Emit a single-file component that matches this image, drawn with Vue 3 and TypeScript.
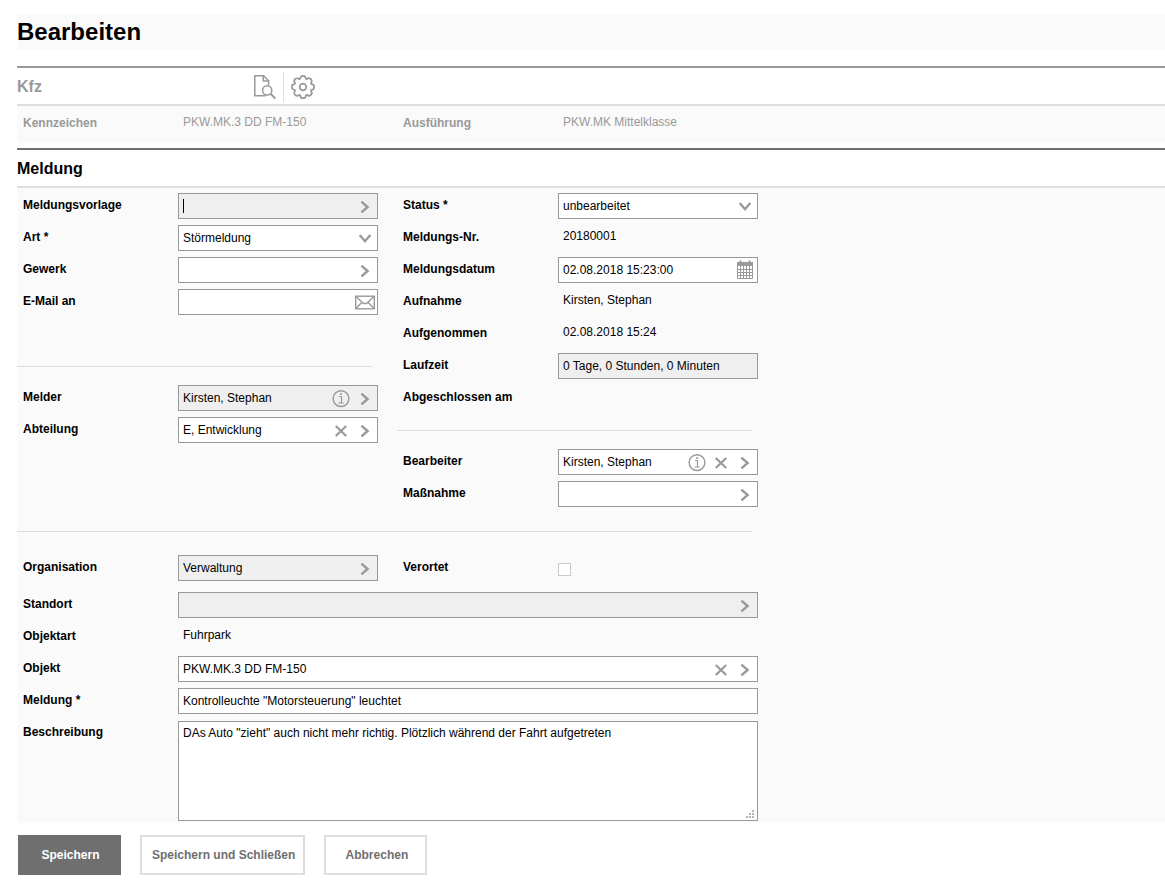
<script setup lang="ts">
import { ref } from 'vue'

type Action = 'info' | 'clear' | 'open' | 'mail' | 'date'
type Kind = 'input' | 'select' | 'text' | 'check' | 'area' | 'gap' | 'rule'

interface Field {
  id: string
  kind: Kind
  label?: string
  value?: string
  locked?: boolean
  caret?: boolean
  options?: string[]
  actions?: Action[]
}

const actionLabels: Record<Action, string> = {
  info: 'Information',
  clear: 'Leeren',
  open: 'Auswählen',
  mail: 'E-Mail',
  date: 'Kalender',
}

const vehicle: Field[] = [
  { id: 'kennzeichen', kind: 'text', label: 'Kennzeichen', value: 'PKW.MK.3 DD FM-150' },
  { id: 'ausfuehrung', kind: 'text', label: 'Ausführung', value: 'PKW.MK Mittelklasse' },
]

const groups = ref<{ name: string; fields: Field[] }[]>([
  {
    name: 'left',
    fields: [
      { id: 'vorlage', kind: 'input', label: 'Meldungsvorlage', value: '', locked: true, caret: true, actions: ['open'] },
      { id: 'art', kind: 'select', label: 'Art *', value: 'Störmeldung', options: ['Störmeldung'] },
      { id: 'gewerk', kind: 'input', label: 'Gewerk', value: '', actions: ['open'] },
      { id: 'email', kind: 'input', label: 'E-Mail an', value: '', actions: ['mail'] },
      { id: 'gap', kind: 'gap' },
      { id: 'rule-left', kind: 'rule' },
      { id: 'melder', kind: 'input', label: 'Melder', value: 'Kirsten, Stephan', locked: true, actions: ['info', 'open'] },
      { id: 'abteilung', kind: 'input', label: 'Abteilung', value: 'E, Entwicklung', actions: ['clear', 'open'] },
    ],
  },
  {
    name: 'right',
    fields: [
      { id: 'status', kind: 'select', label: 'Status *', value: 'unbearbeitet', options: ['unbearbeitet'] },
      { id: 'nummer', kind: 'text', label: 'Meldungs-Nr.', value: '20180001' },
      { id: 'datum', kind: 'input', label: 'Meldungsdatum', value: '02.08.2018 15:23:00', actions: ['date'] },
      { id: 'aufnahme', kind: 'text', label: 'Aufnahme', value: 'Kirsten, Stephan' },
      { id: 'aufgenommen', kind: 'text', label: 'Aufgenommen', value: '02.08.2018 15:24' },
      { id: 'laufzeit', kind: 'input', label: 'Laufzeit', value: '0 Tage, 0 Stunden, 0 Minuten', locked: true },
      { id: 'abgeschlossen', kind: 'text', label: 'Abgeschlossen am', value: '' },
      { id: 'rule-right', kind: 'rule' },
      { id: 'bearbeiter', kind: 'input', label: 'Bearbeiter', value: 'Kirsten, Stephan', actions: ['info', 'clear', 'open'] },
      { id: 'massnahme', kind: 'input', label: 'Maßnahme', value: '', actions: ['open'] },
    ],
  },
  {
    name: 'org',
    fields: [{ id: 'organisation', kind: 'input', label: 'Organisation', value: 'Verwaltung', locked: true, actions: ['open'] }],
  },
  {
    name: 'located',
    fields: [{ id: 'verortet', kind: 'check', label: 'Verortet' }],
  },
  {
    name: 'wide',
    fields: [
      { id: 'standort', kind: 'input', label: 'Standort', value: '', locked: true, actions: ['open'] },
      { id: 'objektart', kind: 'text', label: 'Objektart', value: 'Fuhrpark' },
      { id: 'objekt', kind: 'input', label: 'Objekt', value: 'PKW.MK.3 DD FM-150', actions: ['clear', 'open'] },
      { id: 'meldung', kind: 'input', label: 'Meldung *', value: 'Kontrolleuchte "Motorsteuerung" leuchtet' },
      {
        id: 'beschreibung',
        kind: 'area',
        label: 'Beschreibung',
        value: 'DAs Auto "zieht" auch nicht mehr richtig. Plötzlich während der Fahrt aufgetreten',
      },
    ],
  },
])
</script>

<template>
  <main class="page">
    <h1 class="title">Bearbeiten</h1>

    <section class="vehicle">
      <header class="head">
        <h2>Kfz</h2>
        <div class="tools">
          <button type="button" class="tool" aria-label="Vorschau">
            <svg width="24" height="26" viewBox="0 0 24 26" fill="none" stroke="#999" stroke-width="1.5">
              <path d="M12.6 21.8H1.8V1.8H10.6L15.6 6.8V11.4" />
              <path d="M10.3 2V7.1H15.4" />
              <circle cx="14.2" cy="16.4" r="4.6" />
              <path d="M17.6 19.8L22.4 24.6" stroke-width="2" />
            </svg>
          </button>
          <button type="button" class="tool" aria-label="Einstellungen">
            <svg width="26" height="26" viewBox="0 0 26 26" fill="none" stroke="#999" stroke-width="1.7" stroke-linejoin="round">
              <path d="M10.2 4.6C10.2 0.9 15.8 0.9 15.8 4.6Q16 5 17 5.1C19.6 2.5 23.5 6.4 20.9 9Q21 10 21.4 10.2C25.1 10.2 25.1 15.8 21.4 15.8Q21 16 20.9 17C23.5 19.6 19.6 23.5 17 20.9Q16 21 15.8 21.4C15.8 25.1 10.2 25.1 10.2 21.4Q10 21 9 20.9C6.4 23.5 2.5 19.6 5.1 17Q5 16 4.6 15.8C0.9 15.8 0.9 10.2 4.6 10.2Q5 10 5.1 9C2.5 6.4 6.4 2.5 9 5.1Q10 5 10.2 4.6Z" />
              <circle cx="13" cy="13" r="3.3" />
            </svg>
          </button>
        </div>
      </header>
      <dl class="facts grid">
        <div v-for="f in vehicle" :key="f.id" class="row">
          <dt class="label">{{ f.label }}</dt>
          <dd class="plain">{{ f.value }}</dd>
        </div>
      </dl>
    </section>

    <form class="report" @submit.prevent>
      <header class="head">
        <h2>Meldung</h2>
      </header>
      <div class="panel">
        <div class="grid">
          <div v-for="g in groups" :key="g.name" class="group" :class="g.name">
            <template v-for="f in g.fields" :key="f.id">
              <hr v-if="f.kind === 'rule'" class="rule" />
              <div v-else-if="f.kind === 'gap'" class="row"></div>
              <div v-else-if="f.kind === 'text'" class="row">
                <span class="label">{{ f.label }}</span>
                <output class="plain">{{ f.value }}</output>
              </div>
              <div v-else class="row">
                <label class="label" :for="f.id">{{ f.label }}</label>
                <input v-if="f.kind === 'check'" :id="f.id" class="check" type="checkbox" />
                <div v-else class="field" :class="{ locked: f.locked, caret: f.caret, area: f.kind === 'area' }">
                  <template v-if="f.kind === 'select'">
                    <select :id="f.id" v-model="f.value">
                      <option v-for="o in f.options" :key="o">{{ o }}</option>
                    </select>
                    <svg class="arrow" width="24" height="24" viewBox="0 0 24 24" fill="none" stroke="#999" stroke-width="2.4">
                      <path d="M6.7 8L12 14.2L17.3 8" />
                    </svg>
                  </template>
                  <template v-else-if="f.kind === 'area'">
                    <textarea :id="f.id" v-model="f.value"></textarea>
                    <svg class="grip" width="8" height="8" viewBox="0 0 8 8" fill="#b5b5b5">
                      <path d="M6 0h2v2h-2zM3 3h2v2h-2zM6 3h2v2h-2zM0 6h2v2h-2zM3 6h2v2h-2zM6 6h2v2h-2z" />
                    </svg>
                  </template>
                  <input v-else :id="f.id" v-model="f.value" type="text" :readonly="f.locked" />
                  <button v-for="a in f.actions" :key="a" type="button" class="action" :aria-label="actionLabels[a]">
                    <svg width="24" height="24" viewBox="0 0 24 24" fill="none" stroke="#999">
                      <path v-if="a === 'open'" d="M8.4 7.6L14.6 13L8.4 18.4" stroke-width="2.4" />
                      <path v-else-if="a === 'clear'" d="M6.8 8L17.2 18M17.2 8L6.8 18" stroke-width="2.2" />
                      <g v-else-if="a === 'info'">
                        <circle cx="12" cy="12.6" r="7.9" stroke-width="1.4" />
                        <path d="M10 10.5h2.5v6.3M9.6 17h5" stroke-width="1.2" />
                        <circle cx="12" cy="8" r="1" fill="#999" stroke="none" />
                      </g>
                      <g v-else-if="a === 'mail'" stroke-width="1.4">
                        <rect x="2.7" y="6.2" width="18.6" height="12.6" />
                        <path d="M3 6.5L10.5 13.5H13.5L21 6.5M3 18.5L9 12.3M21 18.5L15 12.3" />
                      </g>
                      <g v-else>
                        <path d="M4 4h16v4H4z" fill="#999" stroke="none" />
                        <path d="M7.5 2.5v3M16.5 2.5v3" stroke-width="2" />
                        <path d="M4.5 8v12.5h15V8M4.5 11.5h15M4.5 14.5h15M4.5 17.5h15M7.5 8v12.5M10.5 8v12.5M13.5 8v12.5M16.5 8v12.5" />
                      </g>
                    </svg>
                  </button>
                </div>
              </div>
            </template>
          </div>
        </div>
      </div>
      <footer class="buttons">
        <button type="submit" class="primary">Speichern</button>
        <button type="submit">Speichern und Schließen</button>
        <button type="button">Abbrechen</button>
      </footer>
    </form>
  </main>
</template>

<style>
body {
  margin: 0;
  background: #fff;
}
</style>

<style scoped>
.page {
  padding: 14px 0 5px 17px;
  font: 12px/24px "Liberation Sans", Arial, sans-serif;
  color: #000;
}
.page * {
  box-sizing: border-box;
}
.title {
  margin: 0 0 16px;
  font-size: 24px;
  line-height: 36px;
  background: #fafafa;
}
.head {
  display: flex;
  align-items: center;
  height: 40px;
  padding-top: 2px;
  border-top: 2px solid #6f6f6f;
  border-bottom: 2px solid #dedede;
}
.head h2 {
  flex: 0 0 231px;
  margin: 0;
  font-size: 16px;
  line-height: 34px;
}
.vehicle {
  margin-bottom: 5px;
  color: #999;
}
.vehicle .head {
  border-top-color: #999;
}
.tools {
  display: flex;
  align-items: center;
}
.tool {
  display: flex;
  align-items: center;
  height: 30px;
  padding: 0 6px 0 5px;
  border: 0;
  background: none;
}
.tool + .tool {
  padding: 0 6px;
  border-left: 1px solid #dedede;
}
.facts {
  margin: 0;
  background: #fafafa;
}
.grid {
  display: grid;
  grid-template-columns: minmax(0, 355px) minmax(0, 355px);
  column-gap: 25px;
  padding: 5px 6px 6px;
}
.panel {
  background: #fafafa;
}
.panel .grid {
  padding-bottom: 2px;
}
.group {
  display: flex;
  flex-direction: column;
  gap: 6px;
}
.row {
  display: flex;
  align-items: flex-start;
  min-height: 26px;
}
.label {
  flex: 0 0 155px;
  font-weight: bold;
}
.plain {
  margin: 0;
  padding-left: 5px;
  line-height: 22px;
}
.field {
  position: relative;
  display: flex;
  flex: 1;
  min-width: 0;
  min-height: 26px;
  border: 1px solid #999;
  background: #fff;
}
.field.locked {
  background: #efefef;
}
.field.area {
  margin-top: 1px;
}
.field.caret::before {
  content: "";
  position: absolute;
  left: 4px;
  top: 5px;
  width: 1px;
  height: 14px;
  background: #000;
}
.field input,
.field select,
.field textarea {
  flex: 1;
  min-width: 0;
  margin: 0;
  padding: 0 4px;
  border: 0;
  outline: 0;
  background: none;
  color: inherit;
  font: inherit;
  appearance: none;
}
.field textarea {
  height: 98px;
  padding-top: 4px;
  line-height: 14px;
  resize: none;
}
.arrow {
  position: absolute;
  right: 0;
  top: 1px;
  pointer-events: none;
}
.grip {
  position: absolute;
  right: 3px;
  bottom: 2px;
}
.action {
  display: flex;
  flex: 0 0 24px;
  padding: 0;
  border: 0;
  background: none;
}
.check {
  width: 13px;
  height: 13px;
  margin: 8px 0 0;
  border: 1px solid #c8c8c8;
  background: #fff;
  appearance: none;
}
.check:checked {
  background: #999;
}
.rule {
  width: 100%;
  height: 1px;
  margin: 13px 0 12px -6px;
  border: 0;
  background: #dedede;
}
.org,
.located {
  position: relative;
  padding-top: 48px;
}
.org::before,
.located::before {
  content: "";
  position: absolute;
  top: 24px;
  left: -6px;
  width: 100%;
  height: 1px;
  background: #dedede;
}
.located::before {
  left: -31px;
  width: calc(100% + 25px);
}
.wide {
  grid-column: 1 / -1;
  padding-top: 11px;
}
.buttons {
  display: flex;
  flex-wrap: wrap;
  gap: 19px;
  padding: 12px 1px 0;
}
.buttons button {
  min-width: 103px;
  height: 40px;
  padding: 0 8px 0 10px;
  border: 2px solid #dedede;
  background: #fff;
  color: #6f6f6f;
  font: inherit;
  font-weight: bold;
}
.buttons .primary {
  border-color: #6f6f6f;
  background: #6f6f6f;
  color: #fff;
}
</style>
